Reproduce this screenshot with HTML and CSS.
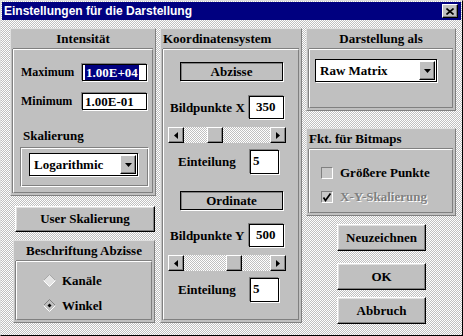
FILE: index.html
```html
<!DOCTYPE html>
<html lang="de">
<head>
    <meta charset="UTF-8">
    <title>Einstellungen für die Darstellung</title>
    <link rel="stylesheet" href="styles.css">
</head>
<body>
    <div class="window">
        <div class="titlebar">
            <span>Einstellungen für die Darstellung</span>
            <div class="close">
                <svg width="8" height="7" viewBox="0 0 8 7"><path d="M0.5 0.5 L7.5 6.5 M7.5 0.5 L0.5 6.5" stroke="#000" stroke-width="1.6"/></svg>
            </div>
        </div>
        <div class="client">
            <div class="col col-left">
                <div class="group intensity">
                    <div class="group-title">Intensität</div>
                    <div class="group-body">
                        <div class="row first">
                            <span class="label lbl-int">Maximum</span>
                            <div class="edit wide"><span class="sel">1.00E+04</span></div>
                        </div>
                        <div class="row second">
                            <span class="label lbl-int">Minimum</span>
                            <div class="edit wide">1.00E-01</div>
                        </div>
                        <div class="sub-label">Skalierung</div>
                        <div class="sub-box">
                            <div class="combo combo-scale">
                                <span>Logarithmic</span>
                                <div class="drop"><svg width="7" height="4" viewBox="0 0 7 4"><path d="M0 0 H7 L3.5 4 Z" fill="#000"/></svg></div>
                            </div>
                        </div>
                    </div>
                </div>
                <div class="button btn-user">User Skalierung</div>
                <div class="group labels">
                    <div class="group-title">Beschriftung Abzisse</div>
                    <div class="group-body radios">
                        <div class="radio">
                            <svg width="13" height="13" viewBox="0 0 13 13"><path d="M0.5 6.5 L6.5 0.5 L12.5 6.5 L6.5 12.5 Z" fill="#e4e4e4"/><path d="M0.5 6.5 L6.5 0.5 L12.5 6.5" stroke="#a8a8a8" fill="none"/><path d="M0.5 6.5 L6.5 12.5 L12.5 6.5" stroke="#fff" fill="none"/></svg>
                            <span>Kanäle</span>
                        </div>
                        <div class="radio">
                            <svg width="13" height="13" viewBox="0 0 13 13"><path d="M0.5 6.5 L6.5 0.5 L12.5 6.5" stroke="#808080" fill="none"/><path d="M0.5 6.5 L6.5 12.5 L12.5 6.5" stroke="#fff" fill="none"/><path d="M4.5 6.5 L6.5 4.5 L8.5 6.5 L6.5 8.5 Z" fill="#000"/></svg>
                            <span>Winkel</span>
                        </div>
                    </div>
                </div>
            </div>

            <div class="col col-mid">
                <div class="group coords">
                    <div class="group-title left">Koordinatensystem</div>
                    <div class="group-body">
                        <div class="caption cap-first">Abzisse</div>
                        <div class="row pixels">
                            <span class="label lbl-px">Bildpunkte X</span>
                            <div class="edit num">350</div>
                        </div>
                        <div class="scroll">
                            <div class="arrow"><svg width="4" height="7" viewBox="0 0 4 7"><path d="M4 0 L0 3.5 L4 7 Z" fill="#000"/></svg></div>
                            <div class="track"><div class="thumb" style="left: 23px;"></div></div>
                            <div class="arrow"><svg width="4" height="7" viewBox="0 0 4 7"><path d="M0 0 L4 3.5 L0 7 Z" fill="#000"/></svg></div>
                        </div>
                        <div class="row steps">
                            <span class="label lbl-step">Einteilung</span>
                            <div class="edit small">5</div>
                        </div>
                        <div class="caption cap-second">Ordinate</div>
                        <div class="row pixels pixels-y">
                            <span class="label lbl-px">Bildpunkte Y</span>
                            <div class="edit num">500</div>
                        </div>
                        <div class="scroll">
                            <div class="arrow"><svg width="4" height="7" viewBox="0 0 4 7"><path d="M4 0 L0 3.5 L4 7 Z" fill="#000"/></svg></div>
                            <div class="track"><div class="thumb" style="left: 42px;"></div></div>
                            <div class="arrow"><svg width="4" height="7" viewBox="0 0 4 7"><path d="M0 0 L4 3.5 L0 7 Z" fill="#000"/></svg></div>
                        </div>
                        <div class="row steps">
                            <span class="label lbl-step">Einteilung</span>
                            <div class="edit small">5</div>
                        </div>
                    </div>
                </div>
            </div>

            <div class="col col-right">
                <div class="group display">
                    <div class="group-title">Darstellung als</div>
                    <div class="group-body">
                        <div class="combo combo-mode">
                            <span>Raw Matrix</span>
                            <div class="drop"><svg width="7" height="4" viewBox="0 0 7 4"><path d="M0 0 H7 L3.5 4 Z" fill="#000"/></svg></div>
                        </div>
                    </div>
                </div>
                <div class="group bitmaps">
                    <div class="group-title left">Fkt. für Bitmaps</div>
                    <div class="group-body checks">
                        <div class="check">
                            <div class="box"></div>
                            <span>Größere Punkte</span>
                        </div>
                        <div class="check disabled">
                            <div class="box"><svg width="10" height="10" viewBox="0 0 10 10"><path d="M1.5 5.5 L3.5 8.5 L8.5 1.5" stroke="#000" stroke-width="1.7" fill="none"/></svg></div>
                            <span>X-Y-Skalierung</span>
                        </div>
                    </div>
                </div>
                <div class="button btn-side btn-redraw">Neuzeichnen</div>
                <div class="button btn-side btn-ok">OK</div>
                <div class="button btn-side btn-cancel">Abbruch</div>
            </div>
        </div>
    </div>
</body>
</html>
```

FILE: styles.css
```css
body {
    margin: 0;
    font-family: "Liberation Serif", "Times New Roman", serif;
    font-weight: bold;
    font-size: 13px;
    color: #000;
}
.window {
    width: 463px;
    height: 336px;
    box-sizing: border-box;
    border: 1px solid;
    border-color: #dfdfdf #000 #000 #dfdfdf;
    padding: 1px;
    display: flex;
    flex-direction: column;
    background: repeating-conic-gradient(#c0c0c0 0 25%, #fff 0 50%) 0 0 / 2px 2px;
}
.titlebar {
    height: 18px;
    flex-shrink: 0;
    background: #000080;
    color: #fff;
    font-family: "Liberation Sans", Arial, sans-serif;
    font-size: 12px;
    display: flex;
    align-items: center;
    justify-content: space-between;
    padding-left: 2px;
    padding-right: 3px;
}
.close {
    width: 16px;
    height: 14px;
    box-sizing: border-box;
    background: #c0c0c0;
    border: 1px solid;
    border-color: #fff #000 #000 #fff;
    box-shadow: inset -1px -1px #808080;
    display: flex;
    align-items: center;
    justify-content: center;
}
.client {
    flex: 1;
    display: flex;
    gap: 4px;
    padding: 8px 0 0 8px;
}
.col {
    display: flex;
    flex-direction: column;
}
.col-left {
    width: 146px;
}
.col-mid {
    width: 142px;
}
.col-right {
    width: 150px;
}

/* group boxes */
.group {
    background: #c0c0c0;
    border: 1px solid;
    border-color: #dfdfdf #808080 #808080 #dfdfdf;
    box-sizing: border-box;
    display: flex;
    flex-direction: column;
}
.group-title {
    height: 20px;
    line-height: 20px;
    text-align: center;
    white-space: nowrap;
}
.group-title.left {
    text-align: left;
    padding-left: 2px;
}
.group-body {
    flex: 1;
    margin: 0 2px 2px;
    border: 1px solid;
    border-color: #fff #808080 #808080 #fff;
    box-shadow: -1px 0 #808080, 0 -1px #808080;
    display: flex;
    flex-direction: column;
}
.intensity {
    height: 168px;
}
.labels {
    height: 83px;
    width: 142px;
    margin: 8px 0 0 3px;
}
.coords {
    height: 295px;
}
.display {
    height: 83px;
}
.bitmaps {
    height: 88px;
    margin-top: 17px;
}

/* rows with label + edit */
.row {
    display: flex;
    align-items: center;
}
.label {
    white-space: nowrap;
}
.lbl-int {
    width: 61px;
    padding-left: 7px;
    font-size: 12px;
}
.lbl-px {
    width: 79px;
    padding-left: 6px;
}
.lbl-step {
    width: 72px;
    padding-left: 14px;
}
.row.first {
    margin-top: 14px;
}
.row.second {
    margin-top: 12px;
}
.row.pixels {
    margin-top: 15px;
}
.row.pixels-y {
    margin-top: 14px;
}
.row.steps {
    margin-top: 7px;
}
.edit {
    box-sizing: border-box;
    background: #fff;
    border: 1px solid #000;
    box-shadow: 1px 1px 0 #fff, -1px -1px 0 #808080;
    line-height: 15px;
    padding: 1px 2px;
    white-space: nowrap;
}
.edit.wide {
    width: 65px;
    height: 17px;
    padding: 0 2px;
}
.edit.num {
    width: 35px;
    height: 23px;
    padding-left: 6px;
    padding-top: 2px;
}
.edit.small {
    width: 29px;
    height: 24px;
    padding-top: 2px;
}
.sel {
    background: #000080;
    color: #fff;
    padding: 0 1px;
}

.sub-label {
    margin-top: 18px;
    padding-left: 9px;
    line-height: 15px;
}
.sub-box {
    margin: 4px 0 0 6px;
    width: 129px;
    height: 40px;
    box-sizing: border-box;
    border: 1px solid;
    border-color: #808080 #fff #fff #808080;
    box-shadow: inset 1px 1px #fff, inset -1px -1px #808080;
}

/* combo boxes */
.combo {
    box-sizing: border-box;
    height: 23px;
    background: #fff;
    border: 1px solid #000;
    box-shadow: 1px 1px 0 #fff;
    display: flex;
    align-items: center;
    justify-content: space-between;
    padding: 0 1px 0 4px;
}
.combo-scale {
    width: 109px;
    margin: 5px 0 0 8px;
}
.combo-mode {
    width: 122px;
    margin: 9px 0 0 5px;
}
.drop {
    width: 16px;
    height: 19px;
    box-sizing: border-box;
    background: #c0c0c0;
    border: 1px solid;
    border-color: #fff #000 #000 #fff;
    box-shadow: inset -1px -1px #808080;
    display: flex;
    align-items: center;
    justify-content: center;
}

/* captions in the coordinate group */
.caption {
    width: 103px;
    height: 19px;
    box-sizing: border-box;
    margin-left: 16px;
    border: 1px solid #000;
    box-shadow: inset 1px 1px #808080, 1px 1px 0 #fff;
    text-align: center;
    line-height: 17px;
}
.cap-first {
    margin-top: 12px;
}
.cap-second {
    margin-top: 17px;
}

/* scroll bars */
.scroll {
    display: flex;
    width: 118px;
    height: 16px;
    margin: 8px 0 0 4px;
}
.arrow {
    width: 16px;
    height: 16px;
    box-sizing: border-box;
    background: #c0c0c0;
    border: 1px solid;
    border-color: #fff #000 #000 #fff;
    box-shadow: inset -1px -1px #808080;
    display: flex;
    align-items: center;
    justify-content: center;
}
.track {
    flex: 1;
    position: relative;
    background: repeating-conic-gradient(#c0c0c0 0 25%, #fff 0 50%) 0 0 / 2px 2px;
}
.thumb {
    position: absolute;
    top: 0;
    width: 16px;
    height: 16px;
    box-sizing: border-box;
    background: #c0c0c0;
    border: 1px solid;
    border-color: #fff #000 #000 #fff;
    box-shadow: inset -1px -1px #808080;
}

/* radios and checks */
.radios {
    padding-left: 26px;
}
.radio {
    display: flex;
    align-items: center;
    gap: 6px;
    height: 13px;
    margin-top: 12px;
}
.checks {
    padding-left: 11px;
}
.check {
    display: flex;
    align-items: center;
    gap: 7px;
    height: 12px;
    margin-top: 17px;
}
.check + .check {
    margin-top: 12px;
}
.box {
    width: 12px;
    height: 12px;
    box-sizing: border-box;
    background: #c8c8c8;
    border: 1px solid;
    border-color: #808080 #fff #fff #808080;
    display: flex;
    align-items: center;
    justify-content: center;
}
.check.disabled span {
    color: #808080;
    text-shadow: 1px 1px 0 #fff;
}

/* push buttons */
.button {
    box-sizing: border-box;
    background: #c0c0c0;
    border: 1px solid;
    border-color: #fff #000 #000 #fff;
    box-shadow: inset -1px -1px #808080, inset 1px 1px #dfdfdf;
    display: flex;
    align-items: center;
    justify-content: center;
}
.btn-user {
    width: 140px;
    height: 26px;
    margin: 10px 0 0 5px;
}
.btn-side {
    width: 89px;
    height: 27px;
    margin-left: 31px;
}
.btn-redraw {
    margin-top: 8px;
}
.btn-ok {
    margin-top: 12px;
}
.btn-cancel {
    margin-top: 7px;
}
```
